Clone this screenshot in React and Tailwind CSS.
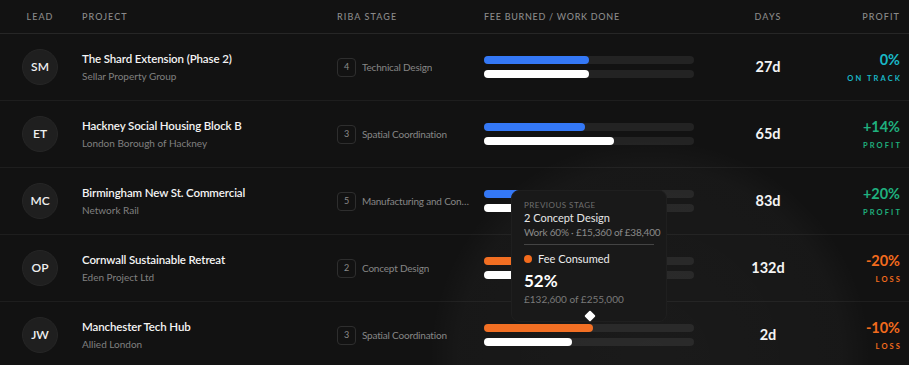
import React from "react";

const rows = [
  { init: "SM", name: "The Shard Extension (Phase 2)", client: "Sellar Property Group", stage: 4, stageName: "Technical Design", fee: 50, work: 50, color: "bg-[#3478f6]", days: "27d", profit: "0%", label: "ON TRACK", pc: "text-[#19b8c6]" },
  { init: "ET", name: "Hackney Social Housing Block B", client: "London Borough of Hackney", stage: 3, stageName: "Spatial Coordination", fee: 48, work: 62, color: "bg-[#3478f6]", days: "65d", profit: "+14%", label: "PROFIT", pc: "text-[#1fb07e]" },
  { init: "MC", name: "Birmingham New St. Commercial", client: "Network Rail", stage: 5, stageName: "Manufacturing and Construction", fee: 40, work: 36, color: "bg-[#3478f6]", days: "83d", profit: "+20%", label: "PROFIT", pc: "text-[#1fb07e]" },
  { init: "OP", name: "Cornwall Sustainable Retreat", client: "Eden Project Ltd", stage: 2, stageName: "Concept Design", fee: 60, work: 48, color: "bg-[#f26b1d]", days: "132d", profit: "-20%", label: "LOSS", pc: "text-[#f26b1d]" },
  { init: "JW", name: "Manchester Tech Hub", client: "Allied London", stage: 3, stageName: "Spatial Coordination", fee: 52, work: 42, color: "bg-[#f26b1d]", days: "2d", profit: "-10%", label: "LOSS", pc: "text-[#f26b1d]" },
];

const grid = "grid grid-cols-[82px_255px_147px_210px_148px_1fr] pr-[9px] items-center";

export default function App() {
  return (
    <div className="relative w-[909px] h-[365px] overflow-hidden bg-[#121212] text-[#f2f2f2]" style={{ fontFamily: "Lato, 'Noto Sans', sans-serif" }}>
      <div className="pointer-events-none absolute left-[430px] top-[140px] w-[440px] h-[440px] rounded-full bg-[radial-gradient(circle,rgba(255,255,255,0.035)_0%,rgba(255,255,255,0.025)_62%,rgba(255,255,255,0)_71%)]" />
      <div className={`${grid} h-[34px] border-b border-[#262626] text-[9px] tracking-[0.12em] text-[#8a8a8a] font-medium`}>
        <div className="flex justify-center pr-[2px]">LEAD</div>
        <div>PROJECT</div>
        <div>RIBA STAGE</div>
        <div className="tracking-[0.08em]">FEE BURNED / WORK DONE</div>
        <div className="text-center">DAYS</div>
        <div className="text-right">PROFIT</div>
      </div>
      {rows.map((r) => (
        <div key={r.init} className={`${grid} h-[67px] border-b border-[#1e1e1e]`}>
          <div className="flex justify-center pr-[2px]">
            <div className="w-9 h-9 rounded-full bg-[#1f1f1f] border border-[#262626] flex items-center justify-center text-[12px] font-semibold text-[#f0f0f0]">{r.init}</div>
          </div>
          <div className="flex flex-col">
            <div className="text-[11.5px] leading-4 font-semibold tracking-[-0.01em] text-[#f4f4f4]">{r.name}</div>
            <div className="text-[10px] leading-4 text-[#808080] mt-[1px]">{r.client}</div>
          </div>
          <div className="flex items-center gap-[6px] pr-3 min-w-0">
            <div className="w-[19px] h-[19px] shrink-0 rounded-[4px] border border-[#2e2e2e] flex items-center justify-center text-[9px] text-[#8a8a8a]">{r.stage}</div>
            <div className="text-[10px] tracking-[-0.02em] text-[#868686] truncate">{r.stageName}</div>
          </div>
          <div className="flex flex-col gap-[6px]">
            <div className="h-2 rounded-full bg-[#232323]">
              <div className={`h-2 rounded-full ${r.color}`} style={{ width: `${r.fee}%` }} />
            </div>
            <div className="h-2 rounded-full bg-[#232323]">
              <div className="h-2 rounded-full bg-white" style={{ width: `${r.work}%` }} />
            </div>
          </div>
          <div className="text-center text-[14.5px] font-bold text-[#f4f4f4]">{r.days}</div>
          <div className={`flex flex-col items-end ${r.pc}`}>
            <div className="text-[14.5px] leading-5 font-bold">{r.profit}</div>
            <div className="text-[7.5px] leading-3 mt-[3px] tracking-[0.28em] mr-[-2px] font-bold">{r.label}</div>
          </div>
        </div>
      ))}
      <div className="absolute left-[511px] top-[190px] w-[156px] h-[132px] rounded-lg bg-[#191919] border border-[#1f1f1f] px-3 pt-[8px] whitespace-nowrap">
        <div className="text-[8px] leading-[10px] tracking-[0.06em] text-[#6e6e6e] mt-[1px]">PREVIOUS STAGE</div>
        <div className="text-[11px] leading-[14px] text-[#e6e6e6] mt-[1px]">2 Concept Design</div>
        <div className="text-[10px] leading-[14px] tracking-[-0.02em] text-[#8a8a8a]">Work 60% · £15,360 of £38,400</div>
        <div className="h-px bg-[#444444] mt-[5px]" />
        <div className="flex items-center gap-[6px] mt-[7px]">
          <div className="w-2 h-2 rounded-full bg-[#f26b1d]" />
          <div className="text-[11px] leading-[14px] text-[#ececec]">Fee Consumed</div>
        </div>
        <div className="text-[17px] leading-[20px] font-bold text-white mt-[5px]">52%</div>
        <div className="text-[10px] leading-[14px] text-[#7a7a7a] mt-[1px]">£132,600 of £255,000</div>
        <div className="absolute left-[74px] top-[121px] w-[8px] h-[8px] rotate-45 bg-white rounded-[1px]" />
      </div>
    </div>
  );
}
